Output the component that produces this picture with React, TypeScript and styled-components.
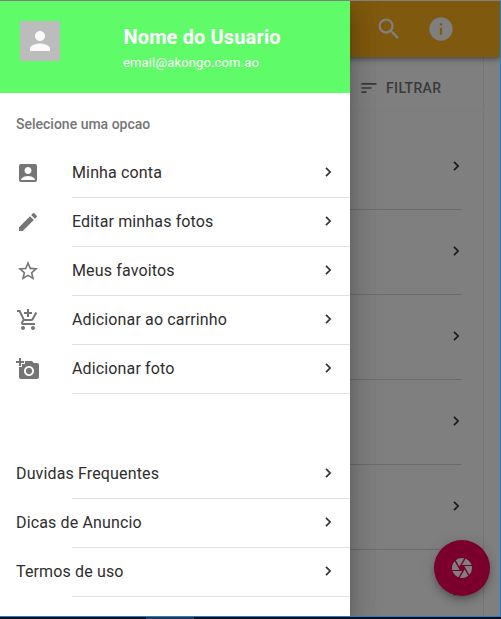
import React from "react";
import styled, { createGlobalStyle } from "styled-components";
import type { IconType } from "react-icons";
import {
  MdAccountBox,
  MdAddAPhoto,
  MdCamera,
  MdInfo,
  MdModeEdit,
  MdOutlineAddShoppingCart,
  MdPerson,
  MdSearch,
  MdSort,
  MdStarBorder,
} from "react-icons/md";

const GlobalStyle = createGlobalStyle`
  * { box-sizing: border-box; }
  body { margin: 0; font-family: Roboto, "Liberation Sans", sans-serif; }
`;

const Screen = styled.div`
  width: 501px;
  height: 619px;
  display: flex;
  flex-direction: column;
  background: #060a10;
  overflow: hidden;
`;

const AppWindow = styled.div`
  position: relative;
  height: 617px;
  flex: none;
  overflow: hidden;
  border: solid #1a7fd8;
  border-width: 1px 1px 1px 0;
  border-top-color: #808080;
`;

const Taskbar = styled.div`
  height: 2px;
  padding-left: 146px;
`;

const TaskbarButton = styled.div`
  width: 48px;
  height: 2px;
  background: #32373f;
`;

const Page = styled.div`
  height: 100%;
  display: flex;
  flex-direction: column;
  background: #fff;
`;

const AppBar = styled.header`
  height: 56px;
  flex: none;
  display: flex;
  align-items: center;
  justify-content: flex-end;
  gap: 24px;
  padding-right: 45px;
  z-index: 1;
  background: #ffb31a;
  color: #fff;
  box-shadow: 0 2px 6px rgba(0, 0, 0, 0.45);
`;

const Cards = styled.main`
  width: 484px;
  flex: 1;
  display: flex;
  flex-direction: column;
  gap: 1px;
`;

const FilterCard = styled.section`
  height: 54px;
  flex: none;
  display: flex;
  align-items: center;
  gap: 7px;
  padding: 8px 0 0 359px;
  border-right: 1px solid #ececec;
  border-bottom: 1px solid #f8f8f8;
  border-radius: 0 0 2px 0;
  color: #757575;
  font-size: 14px;
  font-weight: 500;
  line-height: 20px;
  letter-spacing: 0.35px;
`;

const ListCard = styled.section`
  flex: 1;
  padding-right: 21px;
  border-right: 1px solid #ececec;
  border-radius: 0 2px 0 0;
`;

const ListRow = styled.div<{ $first?: boolean }>`
  height: ${(p) => (p.$first ? 98 : 85)}px;
  display: flex;
  align-items: flex-end;
  justify-content: flex-end;
  padding: 0 1px 38px 0;
  border-bottom: 1px solid #d8d8d8;
`;

const Fab = styled.button`
  position: absolute;
  right: 10px;
  bottom: 20px;
  width: 56px;
  height: 56px;
  z-index: 2;
  display: flex;
  align-items: center;
  justify-content: center;
  padding: 0;
  border: 0;
  border-radius: 50%;
  background: #f50057;
  color: #fff;
  box-shadow: 0 3px 5px -1px rgba(0, 0, 0, 0.2), 0 6px 10px rgba(0, 0, 0, 0.14),
    0 1px 18px rgba(0, 0, 0, 0.12);
`;

const Backdrop = styled.div`
  position: absolute;
  inset: 0;
  z-index: 3;
  background: rgba(0, 0, 0, 0.5);
`;

const Drawer = styled.aside`
  position: absolute;
  inset: 0 auto 0 0;
  width: 350px;
  z-index: 4;
  background: #fff;
  box-shadow: 0 8px 10px -5px rgba(0, 0, 0, 0.2),
    0 16px 24px 2px rgba(0, 0, 0, 0.14), 0 6px 30px 5px rgba(0, 0, 0, 0.12);
`;

const Profile = styled.div`
  height: 92px;
  display: flex;
  padding: 20px 0 0 20px;
  background: #60fb68;
  color: #fff;
`;

const Avatar = styled.div`
  width: 40px;
  height: 40px;
  display: flex;
  align-items: center;
  justify-content: center;
  background: #bcbcbc;
  color: #fafafa;
`;

const Identity = styled.div`
  margin: 4px 0 0 63px;
`;

const Name = styled.div`
  padding-left: 0.5px;
  font-size: 20px;
  font-weight: 700;
  line-height: 24px;
  letter-spacing: 0.13px;
`;

const Email = styled.div`
  margin-top: 4px;
  font-size: 13px;
  line-height: 20px;
  letter-spacing: 0.14px;
`;

const Subheader = styled.div`
  height: 55px;
  padding: 7px 16px 0;
  color: #757575;
  font-size: 14px;
  font-weight: 500;
  line-height: 48px;
`;

const MenuGroup = styled.nav<{ $offset?: number }>`
  margin-top: ${(p) => p.$offset ?? 0}px;
`;

const MenuRow = styled.a`
  height: 49px;
  display: flex;
  align-items: center;
  padding: 0 0 2px 16px;
  background: linear-gradient(#e0e0e0, #e0e0e0) 72px 100% / 100% 1px no-repeat;
  color: #2e2e2e;
  font-size: 16px;
  letter-spacing: 0.14px;
`;

const IconSlot = styled.span`
  width: 56px;
  height: 24px;
  color: #757575;
`;

const Label = styled.span`
  flex: 1;
  line-height: 24px;
`;

const ChevronSvg = styled.svg`
  width: 7px;
  height: 10px;
  flex: none;
  margin-right: 1px;
`;

const MenuChevron = styled.span`
  display: flex;
  margin: 0 17px 1px 0;
`;

function Chevron() {
  return (
    <ChevronSvg viewBox="0 0 7 10">
      <path d="M1 .9l4.1 4.1L1 9.1" fill="none" stroke="#333" strokeWidth="1.7" />
    </ChevronSvg>
  );
}

interface MenuEntry {
  label: string;
  icon?: IconType;
}

const accountMenu: MenuEntry[] = [
  { label: "Minha conta", icon: MdAccountBox },
  { label: "Editar minhas fotos", icon: MdModeEdit },
  { label: "Meus favoitos", icon: MdStarBorder },
  { label: "Adicionar ao carrinho", icon: MdOutlineAddShoppingCart },
  { label: "Adicionar foto", icon: MdAddAPhoto },
];

const helpMenu: MenuEntry[] = [
  { label: "Duvidas Frequentes" },
  { label: "Dicas de Anuncio" },
  { label: "Termos de uso" },
];

function MenuItem({ label, icon: Icon }: MenuEntry) {
  return (
    <MenuRow>
      {Icon && (
        <IconSlot>
          <Icon size={24} />
        </IconSlot>
      )}
      <Label>{label}</Label>
      <MenuChevron>
        <Chevron />
      </MenuChevron>
    </MenuRow>
  );
}

export default function App() {
  return (
    <Screen>
      <GlobalStyle />
      <AppWindow>
        <Page>
          <AppBar>
            <MdSearch size={28} />
            <MdInfo size={28} />
          </AppBar>
          <Cards>
            <FilterCard>
              <MdSort size={20} />
              FILTRAR
            </FilterCard>
            <ListCard>
              {[0, 1, 2, 3, 4, 5].map((row) => (
                <ListRow key={row} $first={row === 0}>
                  <Chevron />
                </ListRow>
              ))}
            </ListCard>
          </Cards>
        </Page>
        <Fab>
          <MdCamera size={24} />
        </Fab>
        <Backdrop />
        <Drawer>
          <Profile>
            <Avatar>
              <MdPerson size={30} />
            </Avatar>
            <Identity>
              <Name>Nome do Usuario</Name>
              <Email>email@akongo.com.ao</Email>
            </Identity>
          </Profile>
          <Subheader>Selecione uma opcao</Subheader>
          <MenuGroup $offset={1}>
            {accountMenu.map((item) => (
              <MenuItem key={item.label} {...item} />
            ))}
          </MenuGroup>
          <MenuGroup $offset={56}>
            {helpMenu.map((item) => (
              <MenuItem key={item.label} {...item} />
            ))}
          </MenuGroup>
        </Drawer>
      </AppWindow>
      <Taskbar>
        <TaskbarButton />
      </Taskbar>
    </Screen>
  );
}
